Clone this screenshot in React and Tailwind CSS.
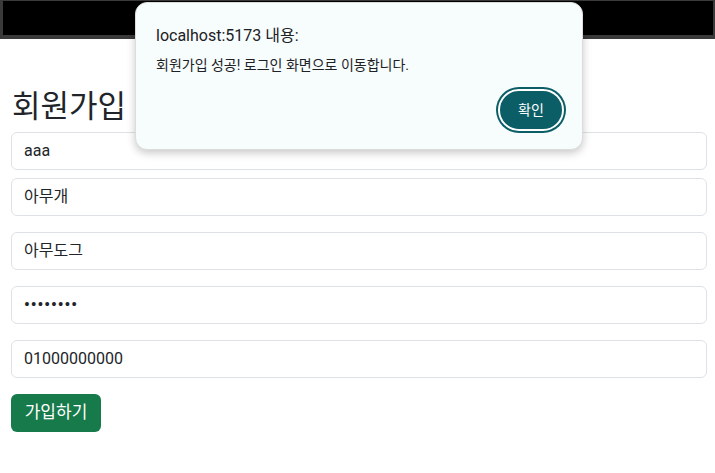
import React from "react";

export default function App() {
  const inputs = [
    { v: "aaa", mt: "mt-0" },
    { v: "아무개", mt: "mt-[8px]" },
    { v: "아무도그", mt: "mt-[16px]" },
    { v: "••••••••", mt: "mt-[16px]", pw: true },
    { v: "01000000000", mt: "mt-[16px]" },
  ];
  return (
    <div className="relative w-[715px] h-[473px] overflow-hidden bg-white text-[#212529] font-['Segoe_UI','Roboto','Noto_Sans_CJK_KR',sans-serif]">
      <div className="h-[39px] bg-[#3a3a3a] pt-px pb-[4px] pl-[3px] pr-[2px] flex">
        <div className="flex-1 bg-black"></div>
      </div>

      <div className="pl-[11px] pr-[8px]">
        <h2 className="mt-[51px] mb-[9px] text-[31px] leading-[33px] font-normal pl-px">회원가입</h2>
        {inputs.map((it, i) => (
          <div
            key={i}
            className={`${it.mt} h-[38px] border border-[#dee2e6] rounded-[6px] bg-white flex items-center px-[12px] text-[16px] ${it.pw ? "tracking-[1px] font-bold" : ""}`}
          >
            {it.v}
          </div>
        ))}
        <div className="mt-[16px] h-[38px] w-[90px] rounded-[6px] bg-[#177a4b] text-white flex items-center justify-center text-[17px]">
          가입하기
        </div>
      </div>

      <div className="absolute left-[135px] top-[2px] w-[448px] h-[148px] rounded-[12px] bg-[#f7fcfd] border border-[#dcdcdc] shadow-[0_3px_8px_rgba(0,0,0,0.22)] pt-[23px] pl-[20px] pr-[16px] flex flex-col">
        <div className="text-[16px] leading-[20px] text-[#202124]">localhost:5173 내용:</div>
        <div className="mt-[9px] text-[14px] leading-[20px] text-[#202124]">회원가입 성공! 로그인 화면으로 이동합니다.</div>
        <div className="mt-[12px] flex justify-end">
          <div className="rounded-full bg-[#0b5e66] p-[2px]">
            <div className="rounded-full bg-[#0b5e66] border-2 border-white h-[42px] w-[66px] flex items-center justify-center text-white text-[14px]">
              확인
            </div>
          </div>
        </div>
      </div>
    </div>
  );
}
